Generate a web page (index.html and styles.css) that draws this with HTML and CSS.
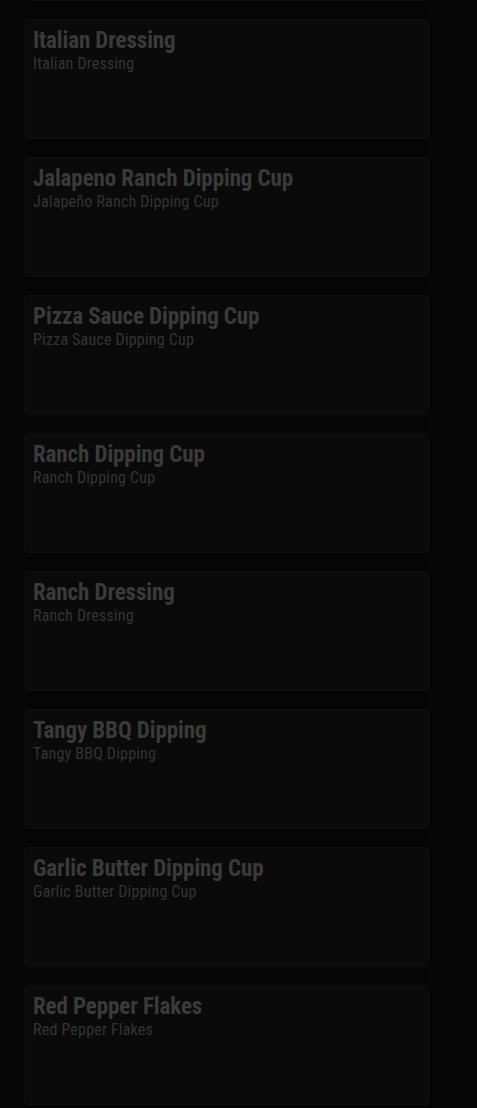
FILE: index.html
```html
<!DOCTYPE html>
<html>
<head>
    <link rel="stylesheet" href="styles.css">
</head>
<body>
    <div class="overlay">
        <div class="lista">
            <!-- card anterior, ja rolado para fora da tela -->
            <div class="item"></div>
            <div class="item">
                <b class="item-nome">Italian Dressing</b>
                <span class="item-desc">Italian Dressing</span>
            </div>
            <div class="item">
                <b class="item-nome">Jalapeno Ranch Dipping Cup</b>
                <span class="item-desc">Jalapeño Ranch Dipping Cup</span>
            </div>
            <div class="item">
                <b class="item-nome">Pizza Sauce Dipping Cup</b>
                <span class="item-desc">Pizza Sauce Dipping Cup</span>
            </div>
            <div class="item">
                <b class="item-nome">Ranch Dipping Cup</b>
                <span class="item-desc">Ranch Dipping Cup</span>
            </div>
            <div class="item">
                <b class="item-nome">Ranch Dressing</b>
                <span class="item-desc">Ranch Dressing</span>
            </div>
            <div class="item">
                <b class="item-nome">Tangy BBQ Dipping</b>
                <span class="item-desc">Tangy BBQ Dipping</span>
            </div>
            <div class="item">
                <b class="item-nome">Garlic Butter Dipping Cup</b>
                <span class="item-desc">Garlic Butter Dipping Cup</span>
            </div>
            <div class="item">
                <b class="item-nome">Red Pepper Flakes</b>
                <span class="item-desc">Red Pepper Flakes</span>
            </div>
        </div>
    </div>
</body>
</html>
```

FILE: styles.css
```css
/* Lista de molhos, atras do overlay escuro */
body {
    margin: 0;
    background-color: #050505;
    font-family: "Roboto Condensed", Roboto, "Liberation Sans Narrow", sans-serif;
    font-stretch: condensed;
    overflow: hidden;
}

.overlay {
    height: 1108px;
    overflow: hidden;
}

.lista {
    width: 405px;
    margin-left: 23px;
    margin-top: -119px;
    display: flex;
    flex-direction: column;
    gap: 18px;
    border-left: 1px solid #0a0808;
    border-right: 1px solid #0a0808;
}

.item {
    height: 120px;
    box-sizing: border-box;
    background-color: #0a0a0a;
    border: 1px solid #140b0c;
    border-radius: 4px;
    padding: 7px 8px;
    display: flex;
    flex-direction: column;
}

.item-nome {
    color: #3a3a3a;
    font-size: 23px;
    line-height: 28px;
    font-weight: 700;
    letter-spacing: -0.1px;
}

.item-desc {
    color: #343434;
    font-size: 16px;
    line-height: 18px;
    letter-spacing: 0.2px;
}
```
